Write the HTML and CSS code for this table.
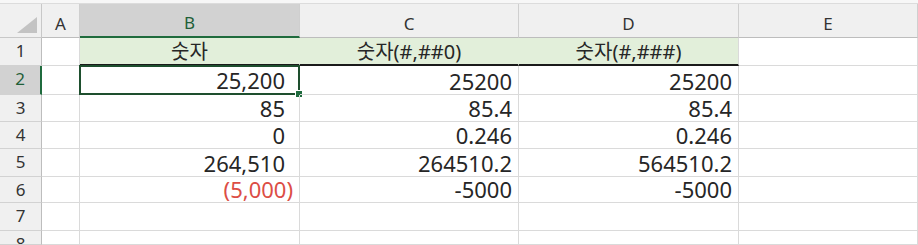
FILE: index.html
```html
<!DOCTYPE html>
<html lang="ko">
<head>
<meta charset="utf-8">
<link rel="stylesheet" href="styles.css">
</head>
<body>
<div class="topstrip"></div>
<div class="sheet">
  <div class="corner"><span class="tri"></span></div>
  <div class="colhead">A</div>
  <div class="colhead sel">B</div>
  <div class="colhead">C</div>
  <div class="colhead">D</div>
  <div class="colhead">E</div>

  <div class="rowhead">1</div>
  <div class="cell"></div>
  <div class="cell title">숫자</div>
  <div class="cell title">숫자(#,##0)</div>
  <div class="cell title last">숫자(#,###)</div>
  <div class="cell"></div>

  <div class="rowhead sel">2</div>
  <div class="cell"></div>
  <div class="cell num active acct">25,200<span class="handle"></span></div>
  <div class="cell num">25200</div>
  <div class="cell num">25200</div>
  <div class="cell"></div>

  <div class="rowhead">3</div>
  <div class="cell"></div>
  <div class="cell num acct">85</div>
  <div class="cell num">85.4</div>
  <div class="cell num">85.4</div>
  <div class="cell"></div>

  <div class="rowhead">4</div>
  <div class="cell"></div>
  <div class="cell num acct">0</div>
  <div class="cell num">0.246</div>
  <div class="cell num">0.246</div>
  <div class="cell"></div>

  <div class="rowhead">5</div>
  <div class="cell"></div>
  <div class="cell num acct">264,510</div>
  <div class="cell num">264510.2</div>
  <div class="cell num">564510.2</div>
  <div class="cell"></div>

  <div class="rowhead">6</div>
  <div class="cell"></div>
  <div class="cell num neg">(5,000)</div>
  <div class="cell num">-5000</div>
  <div class="cell num">-5000</div>
  <div class="cell"></div>

  <div class="rowhead">7</div>
  <div class="cell"></div>
  <div class="cell"></div>
  <div class="cell"></div>
  <div class="cell"></div>
  <div class="cell"></div>

  <div class="rowhead">8</div>
  <div class="cell"></div>
  <div class="cell"></div>
  <div class="cell"></div>
  <div class="cell"></div>
  <div class="cell"></div>
</div>
</body>
</html>
```

FILE: styles.css
```css
html, body {
  margin: 0;
  padding: 0;
  background: #ffffff;
  overflow: hidden;
}
body {
  width: 918px;
  height: 245px;
  font-family: "Noto Sans", "Noto Sans CJK KR", sans-serif;
  color: #262626;
}
.topstrip {
  height: 3px;
  background: #f7f7f7;
  border-bottom: 1px solid #dcdcdc;
}
.sheet {
  display: grid;
  grid-template-columns: 42px 38px 220px 219px 220px 1fr;
  grid-template-rows: 34px 28px 29px 27px 27px 28px 26px 28px 14px;
}
.corner {
  background: #f0f0f0;
  border-right: 1px solid #c8c8c8;
  border-bottom: 1px solid #c8c8c8;
  position: relative;
}
.tri {
  position: absolute;
  right: 4px;
  bottom: 4px;
  width: 0;
  height: 0;
  border-left: 20px solid transparent;
  border-bottom: 16px solid #c3c3c3;
}
.colhead {
  background: #f0f0f0;
  border-right: 1px solid #cfcfcf;
  border-bottom: 1px solid #bdbdbd;
  display: flex;
  align-items: center;
  justify-content: center;
  padding-top: 5px;
  box-sizing: border-box;
  font-size: 17px;
  color: #333333;
}
.colhead.sel {
  background: #d2d2d2;
  border-bottom: 2px solid #1f6b3d;
  color: #1f5f38;
}
.rowhead {
  background: #f0f0f0;
  border-right: 1px solid #bdbdbd;
  border-bottom: 1px solid #d2d2d2;
  display: flex;
  align-items: flex-start;
  justify-content: center;
  padding-top: 1px;
  box-sizing: border-box;
  font-size: 17px;
  line-height: 24px;
  color: #333333;
  overflow: hidden;
}
.rowhead.sel {
  background: #d2d2d2;
  border-right: 2px solid #1f6b3d;
  color: #1f5f38;
}
.cell {
  border-right: 1px solid #dadada;
  border-bottom: 1px solid #dadada;
  box-sizing: border-box;
  display: flex;
  align-items: flex-end;
  padding: 0 6px 2px 6px;
  font-size: 22px;
  line-height: 22px;
  white-space: nowrap;
  position: relative;
}
.title {
  background: #e2efda;
  justify-content: center;
  border-bottom: 2px solid #1a1a1a;
  border-right-color: #e2efda;
  padding-bottom: 1px;
  font-size: 20px;
}
.title.last {
  border-right-color: #dadada;
}
.num {
  justify-content: flex-end;
}
.acct {
  padding-right: 14px;
}
.neg {
  color: #dc4d45;
  padding-right: 6px;
}
.active {
  border: 2px solid #1e4f2e;
  margin: -1px 0 0 -1px;
  padding-right: 13px;
}
.handle {
  position: absolute;
  right: -5px;
  bottom: -5px;
  width: 6px;
  height: 6px;
  background: #1f6b3d;
  border: 1px solid #ffffff;
}
```
